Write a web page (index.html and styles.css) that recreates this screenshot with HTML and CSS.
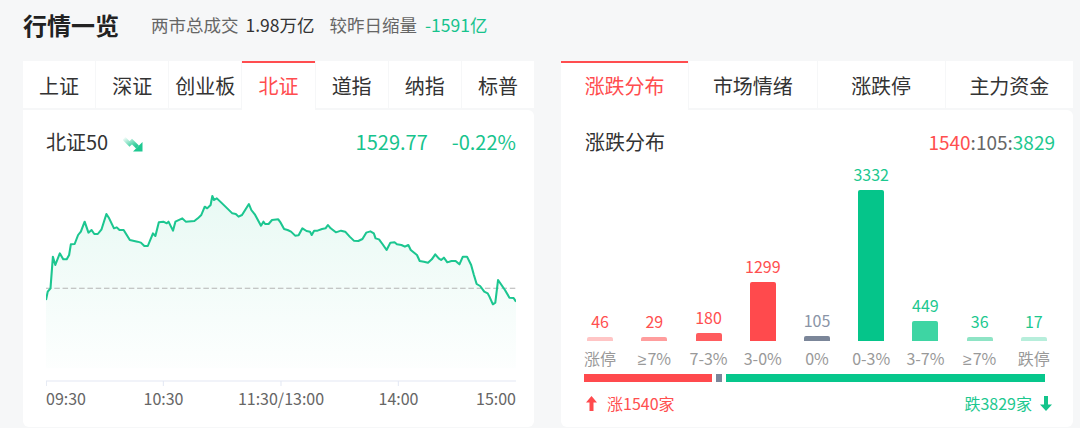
FILE: index.html
```html
<!DOCTYPE html>
<html lang="zh-CN">
<head>
<meta charset="utf-8">
<title>行情一览</title>
<link rel="stylesheet" href="styles.css">
</head>
<body>
<div class="page">
  <header class="top">
    <h1 class="title">行情一览</h1>
    <div class="summary">
      <span>两市总成交</span><span class="val">1.98万亿</span>
      <span class="key2">较昨日缩量</span><span class="down">-1591亿</span>
    </div>
  </header>

  <div class="panels">
    <section class="panel panel-left">
      <nav class="tabs">
        <div class="tab">上证</div>
        <div class="tab">深证</div>
        <div class="tab">创业板</div>
        <div class="tab active">北证</div>
        <div class="tab">道指</div>
        <div class="tab">纳指</div>
        <div class="tab">标普</div>
      </nav>
      <div class="card card-left">
        <div class="card-head">
          <div class="name">北证50
            <svg class="trend" width="20" height="16" viewBox="0 0 20 16">
              <defs>
                <linearGradient id="tg" x1="0" y1="0" x2="1" y2="1">
                  <stop offset="0" stop-color="#1ec891" stop-opacity="0.08"/>
                  <stop offset="0.7" stop-color="#1ec891" stop-opacity="0.8"/>
                  <stop offset="1" stop-color="#1ec891"/>
                </linearGradient>
              </defs>
              <path d="M1 2.5 L6.5 8 L9 5.5 L14.5 11" fill="none" stroke="url(#tg)" stroke-width="4"/>
              <path d="M10 15.5 L19.5 15.5 L19.5 6 Z" fill="#1ec891"/>
            </svg>
          </div>
          <div class="quote"><span>1529.77</span><span>-0.22%</span></div>
        </div>
        <div class="chart">
          <svg width="470" height="226" viewBox="135 0 1362 678" preserveAspectRatio="none">
            <defs>
              <linearGradient id="fill" gradientUnits="userSpaceOnUse" x1="0" y1="100" x2="0" y2="625">
                <stop offset="0" stop-color="#1cc690" stop-opacity="0.10"/>
                <stop offset="1" stop-color="#1cc690" stop-opacity="0.01"/>
              </linearGradient>
            </defs>
            <path fill="url(#fill)" d="M135 420 L140 395 L148 385 L155 290 L162 315 L175 280 L185 298 L195 298 L202 285 L207 253 L218 252 L228 225 L236 215 L247 185 L258 218 L267 210 L275 222 L285 222 L296 208 L310 162 L318 175 L332 205 L340 202 L348 210 L360 210 L378 240 L400 245 L410 248 L420 258 L430 258 L445 220 L452 228 L462 187 L475 185 L485 190 L490 185 L503 212 L510 185 L530 175 L540 185 L565 183 L575 175 L585 165 L595 140 L602 145 L612 135 L617 108 L622 120 L630 115 L640 125 L655 140 L675 160 L685 162 L693 170 L703 165 L723 132 L730 150 L740 163 L758 197 L765 185 L770 192 L780 192 L790 180 L808 178 L815 188 L825 207 L835 210 L845 215 L857 227 L867 226 L878 205 L890 213 L900 215 L905 225 L912 212 L922 212 L935 207 L945 205 L952 195 L960 205 L975 217 L990 212 L1002 215 L1015 230 L1027 242 L1040 243 L1052 237 L1063 218 L1075 214 L1085 220 L1090 235 L1100 238 L1110 252 L1122 270 L1133 248 L1145 247 L1152 253 L1165 255 L1175 260 L1185 255 L1192 270 L1210 285 L1218 303 L1230 305 L1242 308 L1253 298 L1263 283 L1273 295 L1280 300 L1288 293 L1298 307 L1310 303 L1322 303 L1333 313 L1343 290 L1355 290 L1367 315 L1375 345 L1383 372 L1393 378 L1405 395 L1415 400 L1420 410 L1430 433 L1437 428 L1445 360 L1455 375 L1465 390 L1478 413 L1490 414 L1497 425 L1497 625 L135 625 Z"/>
            <line x1="135" y1="385" x2="1497" y2="385" stroke="#b4b4b4" stroke-width="3" stroke-dasharray="16 8"/>
            <path fill="none" stroke="#1cc690" stroke-width="6" stroke-linejoin="round" d="M135 420 L140 395 L148 385 L155 290 L162 315 L175 280 L185 298 L195 298 L202 285 L207 253 L218 252 L228 225 L236 215 L247 185 L258 218 L267 210 L275 222 L285 222 L296 208 L310 162 L318 175 L332 205 L340 202 L348 210 L360 210 L378 240 L400 245 L410 248 L420 258 L430 258 L445 220 L452 228 L462 187 L475 185 L485 190 L490 185 L503 212 L510 185 L530 175 L540 185 L565 183 L575 175 L585 165 L595 140 L602 145 L612 135 L617 108 L622 120 L630 115 L640 125 L655 140 L675 160 L685 162 L693 170 L703 165 L723 132 L730 150 L740 163 L758 197 L765 185 L770 192 L780 192 L790 180 L808 178 L815 188 L825 207 L835 210 L845 215 L857 227 L867 226 L878 205 L890 213 L900 215 L905 225 L912 212 L922 212 L935 207 L945 205 L952 195 L960 205 L975 217 L990 212 L1002 215 L1015 230 L1027 242 L1040 243 L1052 237 L1063 218 L1075 214 L1085 220 L1090 235 L1100 238 L1110 252 L1122 270 L1133 248 L1145 247 L1152 253 L1165 255 L1175 260 L1185 255 L1192 270 L1210 285 L1218 303 L1230 305 L1242 308 L1253 298 L1263 283 L1273 295 L1280 300 L1288 293 L1298 307 L1310 303 L1322 303 L1333 313 L1343 290 L1355 290 L1367 315 L1375 345 L1383 372 L1393 378 L1405 395 L1415 400 L1420 410 L1430 433 L1437 428 L1445 360 L1455 375 L1465 390 L1478 413 L1490 414 L1497 425"/>
            <line x1="135" y1="663" x2="1497" y2="663" stroke="#e3e8f3" stroke-width="3"/>
            <g stroke="#e3e8f3" stroke-width="3">
              <line x1="136" y1="663" x2="136" y2="678"/>
              <line x1="475" y1="663" x2="475" y2="678"/>
              <line x1="816" y1="663" x2="816" y2="678"/>
              <line x1="1156" y1="663" x2="1156" y2="678"/>
            </g>
          </svg>
        </div>
        <div class="axis">
          <span class="tick first">09:30</span>
          <span class="tick q1">10:30</span>
          <span class="tick q2">11:30/13:00</span>
          <span class="tick q3">14:00</span>
          <span class="tick last">15:00</span>
        </div>
      </div>
    </section>

    <section class="panel panel-right">
      <nav class="tabs">
        <div class="tab active">涨跌分布</div>
        <div class="tab">市场情绪</div>
        <div class="tab">涨跌停</div>
        <div class="tab">主力资金</div>
      </nav>
      <div class="card card-right">
        <div class="card-head">
          <div class="name">涨跌分布</div>
          <div class="ratio"><span class="up">1540</span>:105:<span class="dn">3829</span></div>
        </div>
        <div class="bars">
          <div class="col"><span class="num up">46</span><span class="bar b1" style="height:4px"></span></div>
          <div class="col"><span class="num up">29</span><span class="bar b2" style="height:4px"></span></div>
          <div class="col"><span class="num up">180</span><span class="bar b3" style="height:8px"></span></div>
          <div class="col"><span class="num up">1299</span><span class="bar b4" style="height:59px"></span></div>
          <div class="col"><span class="num flat">105</span><span class="bar b5" style="height:5px"></span></div>
          <div class="col"><span class="num dn">3332</span><span class="bar b6" style="height:151px"></span></div>
          <div class="col"><span class="num dn">449</span><span class="bar b7" style="height:20px"></span></div>
          <div class="col"><span class="num dn">36</span><span class="bar b8" style="height:4px"></span></div>
          <div class="col"><span class="num dn">17</span><span class="bar b9" style="height:4px"></span></div>
        </div>
        <div class="labels">
          <span>涨停</span><span><i class="ge">≥</i>7%</span><span>7-3%</span><span>3-0%</span><span>0%</span><span>0-3%</span><span>3-7%</span><span><i class="ge">≥</i>7%</span><span>跌停</span>
        </div>
        <div class="progress">
          <span class="seg seg-up" style="flex-grow:1540"></span>
          <span class="seg seg-flat"></span>
          <span class="seg seg-dn" style="flex-grow:3829"></span>
        </div>
        <div class="legend">
          <div class="lg up">
            <svg width="11" height="15" viewBox="0 0 11 15"><path d="M5.5 0 L11 6.5 H7.5 V15 H3.5 V6.5 H0 Z" fill="#ff4a4d"/></svg>
            <span>涨1540家</span>
          </div>
          <div class="lg dn">
            <span>跌3829家</span>
            <svg width="12" height="15" viewBox="0 0 12 15"><path d="M6 15 L12 8.5 H8 V0 H4 V8.5 H0 Z" fill="#14c48b"/></svg>
          </div>
        </div>
      </div>
    </section>
  </div>
</div>
</body>
</html>
```

FILE: styles.css
```css
* {
  box-sizing: border-box;
  margin: 0;
  padding: 0;
}

body {
  width: 1080px;
  height: 428px;
  overflow: hidden;
  background: #f6f7f8;
  font-family: "Noto Sans CJK SC", "Noto Sans", sans-serif;
  color: #333;
}

.page {
  padding-left: 23px;
}

/* header */
.top {
  height: 61px;
  display: flex;
  align-items: center;
  padding-bottom: 11px;
}

.title {
  font-size: 24px;
  font-weight: 700;
  line-height: 30px;
  color: #222;
}

.summary {
  margin-left: 32px;
  display: flex;
  font-size: 17.5px;
  line-height: 24px;
  color: #666;
}

.summary .val {
  margin-left: 7px;
  color: #333;
}

.summary .key2 {
  margin-left: 15px;
}

.summary .down {
  margin-left: 8px;
  color: #17c38d;
}

/* panels */
.panels {
  display: flex;
  gap: 27px;
}

.panel-left {
  width: 511px;
}

.panel-right {
  width: 512px;
}

.tabs {
  display: flex;
  gap: 1px;
  height: 49px;
  align-items: flex-start;
}

.tab {
  flex: 1;
  height: 47px;
  display: flex;
  align-items: center;
  justify-content: center;
  padding-top: 1px;
  background: #fff;
  border-top: 2px solid #fff;
  font-size: 20px;
  line-height: 26px;
  color: #333;
}

.tab.active {
  height: 49px;
  padding-bottom: 2px;
  border-top-color: #ff4d4f;
  color: #ff4d4f;
}

.card {
  background: #fff;
  height: 317px;
  border-radius: 0 6px 6px 6px;
}

.card-head {
  display: flex;
  align-items: center;
  justify-content: space-between;
  height: 28px;
  font-size: 20px;
  line-height: 28px;
}

.card-left {
  padding: 18px 18px 0 23px;
}

.name {
  display: flex;
  align-items: center;
  color: #333;
}

.trend {
  margin-left: 15px;
  margin-top: 3px;
}

.quote {
  display: flex;
  gap: 24px;
  color: #17c38d;
}

.chart {
  margin-top: 4px;
  height: 226px;
}

.chart svg {
  display: block;
}

.axis {
  position: relative;
  margin-top: 2px;
  height: 20px;
  font-size: 16px;
  line-height: 20px;
  color: #666;
}

.tick {
  position: absolute;
  top: 0;
  white-space: nowrap;
}

.tick.first {
  left: 0;
}

.tick.q1 {
  left: 25%;
  transform: translateX(-50%);
}

.tick.q2 {
  left: 50%;
  transform: translateX(-50%);
}

.tick.q3 {
  left: 75%;
  transform: translateX(-50%);
}

.tick.last {
  right: 0;
}

/* right card */
.card-right {
  padding-top: 18px;
}

.card-right .card-head {
  padding: 0 18px 0 24px;
}

.ratio {
  font-size: 19px;
  color: #666;
}

.up {
  color: #ff4f4f;
}

.dn {
  color: #1cc88f;
}

.flat {
  color: #8a94a6;
}

.bars {
  display: flex;
  align-items: flex-end;
  height: 185px;
  padding: 0 12px;
}

.col {
  flex: 1;
  display: flex;
  flex-direction: column;
  align-items: center;
}

.num {
  font-size: 16px;
  line-height: 20px;
  margin-bottom: 6px;
}

.bar {
  display: block;
  width: 26px;
  border-radius: 2px 2px 0 0;
}

.b1 { background: #ffc5c5; }
.b2 { background: #ff9d9d; }
.b3 { background: #ff5c5e; }
.b4 { background: #ff4a4d; }
.b5 { background: #7b8699; }
.b6 { background: #05c58a; }
.b7 { background: #3ed5a3; }
.b8 { background: #8ee4c5; }
.b9 { background: #b7eedb; }

.labels {
  display: flex;
  padding: 0 12px;
  margin-top: 7px;
  font-size: 16px;
  line-height: 20px;
  color: #999;
}

.labels span {
  flex: 1;
  text-align: center;
}

.ge {
  font-style: normal;
  font-family: "Liberation Sans", "DejaVu Sans", sans-serif;
  margin-right: 1px;
}

.progress {
  display: flex;
  gap: 4px;
  height: 8px;
  margin: 4px 28px 0 23px;
}

.seg {
  display: block;
  flex-basis: 0;
}

.seg-up {
  background: #ff4a4d;
}

.seg-flat {
  flex: 0 0 6px;
  background: #7b8699;
}

.seg-dn {
  background: #06c78c;
}

.legend {
  display: flex;
  justify-content: space-between;
  align-items: center;
  margin-top: 11px;
  padding: 0 21px 0 25px;
  font-size: 16px;
  line-height: 20px;
}

.lg {
  display: flex;
  align-items: center;
  gap: 10px;
}

.lg.dn {
  gap: 8px;
}
```
